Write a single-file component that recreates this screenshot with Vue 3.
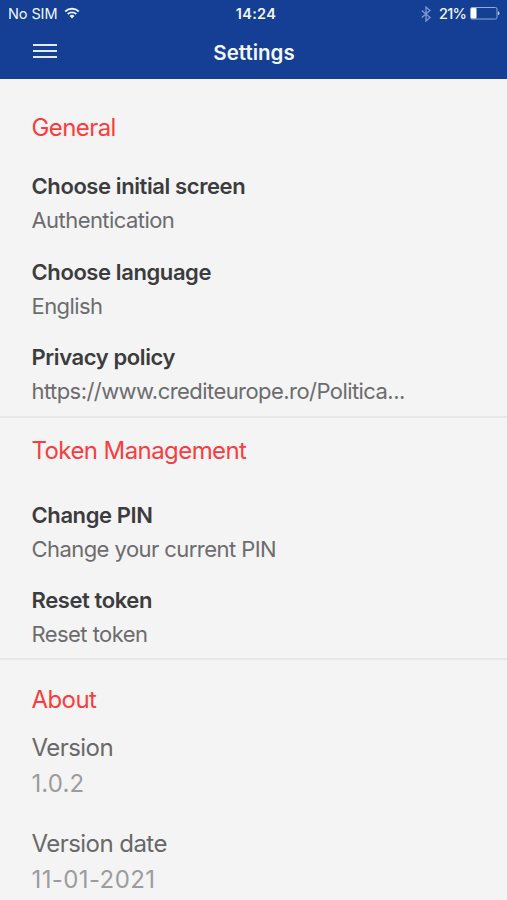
<template>
  <div class="screen">
    <header class="app-header">
      <div class="status-bar">
        <div class="status-left">
          <span class="carrier">No SIM</span>
          <svg
            class="wifi"
            viewBox="0 0 16 12"
          >
            <path
              d="M1.2 4.5a9.8 9.8 0 0 1 13.6 0M3.7 7a6.3 6.3 0 0 1 8.6 0"
              fill="none"
              stroke="#e9f2ff"
              stroke-width="1.8"
            />
            <path
              d="M5.5 8.9a3.7 3.7 0 0 1 5 0L8 11.5z"
              fill="#e9f2ff"
            />
          </svg>
        </div>
        <span class="clock">14:24</span>
        <div class="status-right">
          <svg
            class="bluetooth"
            viewBox="0 0 10 16"
          >
            <path
              d="M.8 4.4 9 11.6 5 15V1l4 3.4-8.2 7.2"
              fill="none"
              stroke="#7d99d2"
              stroke-width="1.3"
            />
          </svg>
          <span class="percent">21%</span>
          <svg
            class="battery"
            viewBox="0 0 30 13"
          >
            <rect
              x=".5"
              y=".5"
              width="26.5"
              height="11.5"
              rx="1.5"
              fill="none"
              stroke="#8fa9dc"
            />
            <rect
              x="1"
              y="1"
              width="5.5"
              height="10.5"
              rx=".8"
              fill="#fff"
            />
            <path
              d="M28 4.2c2 .8 2 3.3 0 4.1z"
              fill="#c5d6f5"
            />
          </svg>
        </div>
      </div>
      <div class="nav-bar">
        <button
          class="menu-btn"
          aria-label="Menu"
        >
          <span />
          <span />
          <span />
        </button>
        <h1>Settings</h1>
      </div>
    </header>

    <main>
      <section
        v-for="section in sections"
        :key="section.title"
        class="section"
        :class="section.name"
      >
        <h2>{{ section.title }}</h2>
        <div class="items">
          <div
            v-for="item in section.items"
            :key="item.label"
            class="item"
          >
            <div class="label">
              {{ item.label }}
            </div>
            <div class="value">
              {{ item.value }}
            </div>
          </div>
        </div>
      </section>
    </main>
  </div>
</template>

<script setup>
const sections = [
  {
    name: 'general',
    title: 'General',
    items: [
      { label: 'Choose initial screen', value: 'Authentication' },
      { label: 'Choose language', value: 'English' },
      { label: 'Privacy policy', value: 'https://www.crediteurope.ro/Politica...' }
    ]
  },
  {
    name: 'token',
    title: 'Token Management',
    items: [
      { label: 'Change PIN', value: 'Change your current PIN' },
      { label: 'Reset token', value: 'Reset token' }
    ]
  },
  {
    name: 'about',
    title: 'About',
    items: [
      { label: 'Version', value: '1.0.2' },
      { label: 'Version date', value: '11-01-2021' }
    ]
  }
];
</script>

<style>
body {
  margin: 0;
  background-color: #f4f4f4;
}
</style>

<style scoped>
.screen {
  height: 900px;
  overflow: hidden;
  background-color: #f4f4f4;
  font-family: Inter, "Liberation Sans", sans-serif;
}

.app-header {
  box-sizing: border-box;
  height: 79px;
  background-color: #143f94;
  color: #f2f7ff;
}

.status-bar {
  display: grid;
  grid-template-columns: 1fr auto 1fr;
  align-items: center;
  height: 27px;
  padding: 0 7px 0 8px;
}

.status-left,
.status-right {
  display: flex;
  align-items: center;
}

.status-right {
  justify-content: flex-end;
}

.carrier {
  font-size: 14.5px;
  line-height: 17px;
  letter-spacing: -0.1px;
}

.wifi {
  width: 16px;
  height: 12px;
  margin-left: 7px;
  margin-bottom: 1px;
}

.clock {
  margin-left: 4px;
  font-size: 14.5px;
  line-height: 17px;
  font-weight: 600;
  letter-spacing: 0.3px;
}

.bluetooth {
  width: 10px;
  height: 16px;
  margin-right: 8px;
}

.percent {
  font-size: 14.5px;
  line-height: 17px;
  font-weight: 500;
  letter-spacing: -0.8px;
}

.battery {
  width: 30px;
  height: 13px;
  margin-left: 4px;
}

.nav-bar {
  display: grid;
  grid-template-columns: 1fr auto 1fr;
  align-items: center;
  height: 50px;
  padding: 0 32px 0 33px;
}

.menu-btn {
  display: flex;
  flex-direction: column;
  gap: 4px;
  width: 24px;
  margin-bottom: 2px;
  padding: 0;
  border: none;
  background: none;
  cursor: pointer;
}

.menu-btn span {
  height: 2px;
  background-color: #dfeaff;
}

h1 {
  margin: 0;
  font-size: 20.5px;
  font-weight: 600;
}

.section {
  padding-left: 31.5px;
}

h2 {
  margin: 0;
  font-size: 24px;
  line-height: 34px;
  font-weight: 400;
  letter-spacing: -0.58px;
  color: #fa3c3f;
}

.items {
  display: flex;
  flex-direction: column;
  gap: 17.5px;
}

.item {
  font-size: 22px;
  line-height: 34px;
  white-space: nowrap;
}

.label {
  color: #3c3c3e;
  font-weight: 600;
  letter-spacing: -0.4px;
}

.value {
  color: #6c6c6e;
  letter-spacing: -0.56px;
}

.general {
  padding-top: 32px;
  padding-bottom: 8px;
  border-bottom: 2px solid #e5e7e8;
}

.general .items {
  margin-top: 24px;
}

.token {
  padding-top: 15.5px;
  padding-bottom: 7px;
  border-bottom: 2px solid #e5e7e8;
}

.token .items {
  margin-top: 30px;
}

.about {
  padding-top: 22.5px;
}

.about .items {
  margin-top: 13.5px;
  gap: 25px;
}

.about .item {
  font-size: 24px;
  line-height: 35.7px;
}

.about .label {
  color: #68686a;
  font-weight: 400;
  letter-spacing: -0.55px;
}

.about .value {
  color: #9c9c9e;
  letter-spacing: 0.1px;
}

.about .item:last-child .value {
  letter-spacing: 0.4px;
}
</style>
